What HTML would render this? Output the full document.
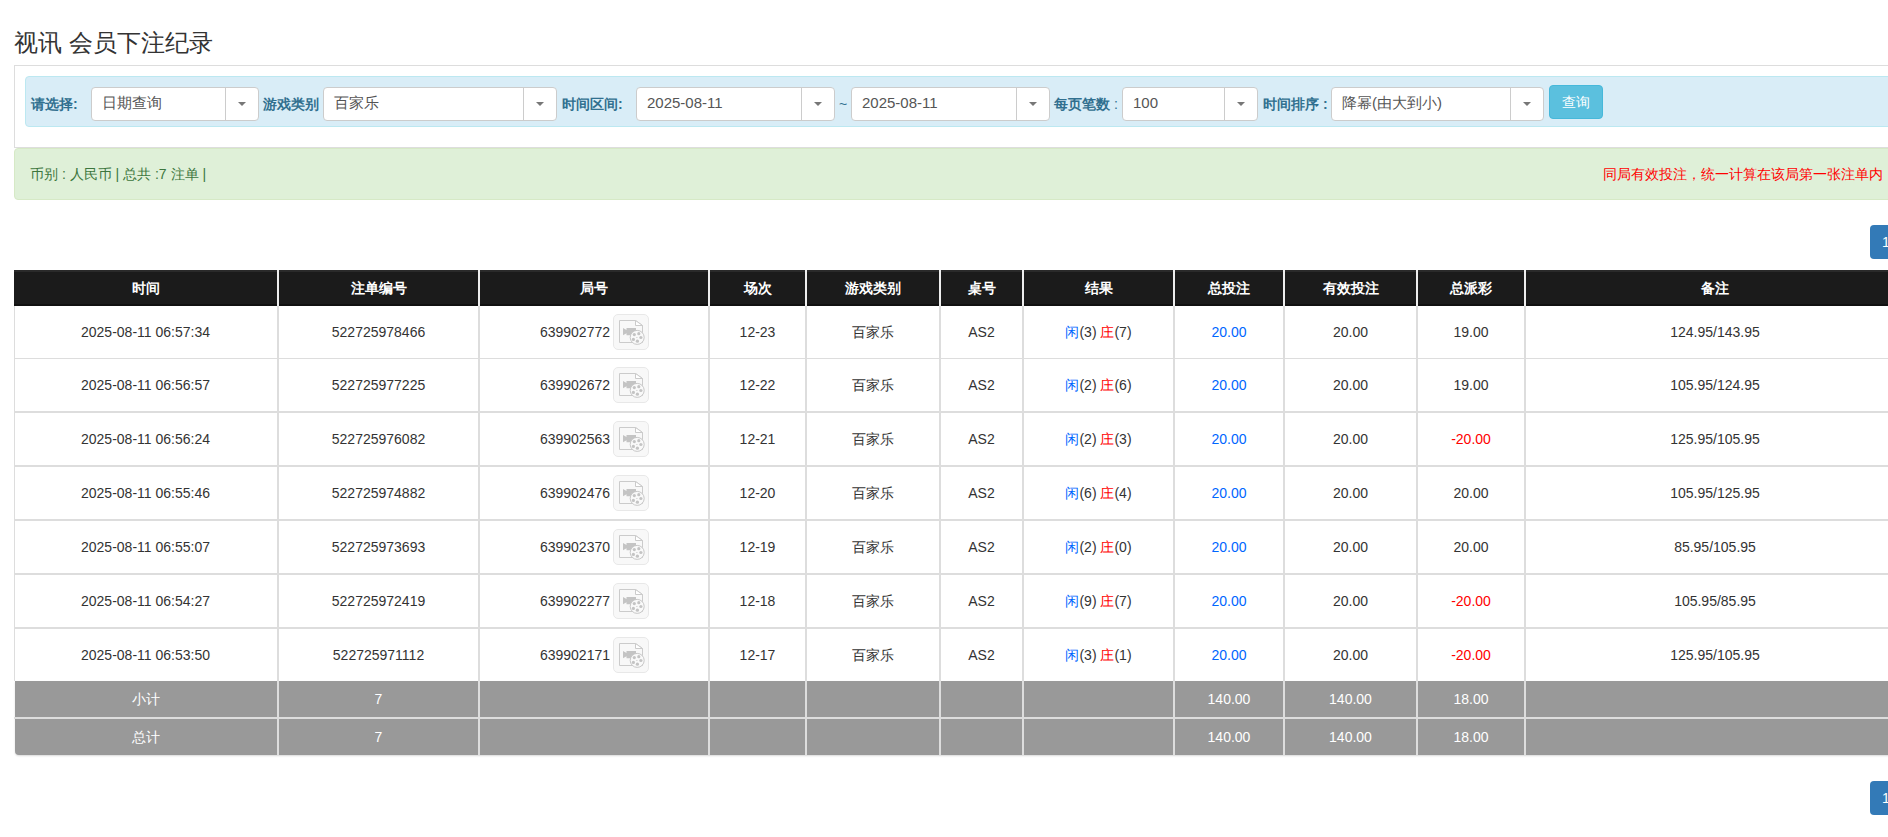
<!DOCTYPE html>
<html><head><meta charset="utf-8">
<style>
html,body{margin:0;padding:0;background:#fff;width:1888px;height:837px;overflow:hidden;position:relative;}
body{font-family:"Liberation Sans",sans-serif;color:#333;font-size:14px;}
.abs{position:absolute;}
.title{left:14px;top:26px;font-size:24px;line-height:34px;color:#333;white-space:nowrap;}
.panel{left:14px;top:65px;width:1900px;height:81px;border:1px solid #ddd;border-right:none;background:#fff;}
.bar{left:25px;top:76px;width:1880px;height:49px;border:1px solid #bce8f1;background:#d9edf7;border-radius:4px;}
.lbl{position:absolute;top:94px;line-height:20px;font-size:14px;font-weight:bold;color:#31708f;white-space:nowrap;}
.sel{position:absolute;top:87px;height:32px;border:1px solid #ccc;border-radius:4px;background:#fff;}
.sel .t{position:absolute;left:10px;top:5px;line-height:20px;font-size:15px;color:#555;white-space:nowrap;}
.sel .d{position:absolute;top:0;bottom:0;width:0;border-left:1px solid #ccc;}
.sel .c{position:absolute;top:14px;width:0;height:0;border-left:4px solid transparent;border-right:4px solid transparent;border-top:4px solid #777;}
.btn{left:1549px;top:85px;width:52px;height:32px;background:#5bc0de;border:1px solid #46b8da;border-radius:4px;color:#fff;font-size:14px;line-height:32px;text-align:center;}
.alert{left:14px;top:148px;width:1900px;height:50px;background:#dff0d8;border:1px solid #d6e9c6;border-radius:4px;}
.atext{left:30px;top:164px;line-height:20px;font-size:14px;color:#3c763d;white-space:nowrap;}
.rtext{left:1603px;top:164px;line-height:20px;font-size:14px;color:#f00;white-space:nowrap;}
.pg{left:1870px;top:225px;width:40px;height:34px;background:#337ab7;border-radius:4px;}
.blue{color:#0066ff}.red{color:#f00}
.cell{position:absolute;text-align:center;white-space:nowrap;font-size:14px;color:#333;}
</style></head><body>
<div class="abs title">视讯 会员下注纪录</div>
<div class="abs panel"></div>
<div class="abs bar"></div>
<div class="lbl" style="left:31px">请选择:</div>
<div class="sel" style="left:91px;width:166px"><span class="t">日期查询</span><span class="d" style="left:133px"></span><span class="c" style="left:146px"></span></div>
<div class="lbl" style="left:263px">游戏类别</div>
<div class="sel" style="left:323px;width:232px"><span class="t">百家乐</span><span class="d" style="left:199px"></span><span class="c" style="left:212px"></span></div>
<div class="lbl" style="left:562px">时间区间:</div>
<div class="sel" style="left:636px;width:197px"><span class="t">2025-08-11</span><span class="d" style="left:164px"></span><span class="c" style="left:177px"></span></div>
<div class="abs" style="left:839px;top:94px;line-height:20px;color:#31708f">~</div>
<div class="sel" style="left:851px;width:197px"><span class="t">2025-08-11</span><span class="d" style="left:164px"></span><span class="c" style="left:177px"></span></div>
<div class="lbl" style="left:1054px">每页笔数 <span style="font-weight:normal">:</span></div>
<div class="sel" style="left:1122px;width:134px"><span class="t">100</span><span class="d" style="left:101px"></span><span class="c" style="left:114px"></span></div>
<div class="lbl" style="left:1263px">时间排序 :</div>
<div class="sel" style="left:1331px;width:211px"><span class="t">降幂(由大到小)</span><span class="d" style="left:178px"></span><span class="c" style="left:191px"></span></div>
<div class="abs btn">查询</div>
<div class="abs alert"></div>
<div class="abs atext">币别 : 人民币 | 总共 :7 注单 |</div>
<div class="abs rtext">同局有效投注，统一计算在该局第一张注单内</div>
<div class="abs pg"></div>
<div class="abs" style="left:14px;top:270px;width:1890px;height:36px;background:#1b1b1b;"></div>
<div class="abs" style="left:14px;top:270px;width:1890px;height:2px;background:#2a2a2a;"></div>
<div class="abs" style="left:14px;top:304px;width:1890px;height:2px;background:#111;"></div>
<div class="abs" style="left:14px;top:358px;width:1890px;height:1px;background:#ddd;"></div>
<div class="abs" style="left:14px;top:411px;width:1890px;height:2px;background:#ddd;"></div>
<div class="abs" style="left:14px;top:465px;width:1890px;height:2px;background:#ddd;"></div>
<div class="abs" style="left:14px;top:519px;width:1890px;height:2px;background:#ddd;"></div>
<div class="abs" style="left:14px;top:573px;width:1890px;height:2px;background:#ddd;"></div>
<div class="abs" style="left:14px;top:627px;width:1890px;height:2px;background:#ddd;"></div>
<div class="abs" style="left:14px;top:306px;width:1px;height:375px;background:#ddd;"></div>
<div class="abs" style="left:15px;top:681px;width:1889px;height:74px;background:#999;border-radius:0 0 4px 4px;box-shadow:0 1px 2px rgba(0,0,0,.15);"></div>
<div class="abs" style="left:14px;top:717px;width:1890px;height:2px;background:#ddd;"></div>
<div class="abs" style="left:277px;top:270px;width:2px;height:36px;background:#eee;"></div>
<div class="abs" style="left:277px;top:306px;width:2px;height:449px;background:#ddd;"></div>
<div class="abs" style="left:478px;top:270px;width:2px;height:36px;background:#eee;"></div>
<div class="abs" style="left:478px;top:306px;width:2px;height:449px;background:#ddd;"></div>
<div class="abs" style="left:708px;top:270px;width:2px;height:36px;background:#eee;"></div>
<div class="abs" style="left:708px;top:306px;width:2px;height:449px;background:#ddd;"></div>
<div class="abs" style="left:805px;top:270px;width:2px;height:36px;background:#eee;"></div>
<div class="abs" style="left:805px;top:306px;width:2px;height:449px;background:#ddd;"></div>
<div class="abs" style="left:939px;top:270px;width:2px;height:36px;background:#eee;"></div>
<div class="abs" style="left:939px;top:306px;width:2px;height:449px;background:#ddd;"></div>
<div class="abs" style="left:1022px;top:270px;width:2px;height:36px;background:#eee;"></div>
<div class="abs" style="left:1022px;top:306px;width:2px;height:449px;background:#ddd;"></div>
<div class="abs" style="left:1173px;top:270px;width:2px;height:36px;background:#eee;"></div>
<div class="abs" style="left:1173px;top:306px;width:2px;height:449px;background:#ddd;"></div>
<div class="abs" style="left:1283px;top:270px;width:2px;height:36px;background:#eee;"></div>
<div class="abs" style="left:1283px;top:306px;width:2px;height:449px;background:#ddd;"></div>
<div class="abs" style="left:1416px;top:270px;width:2px;height:36px;background:#eee;"></div>
<div class="abs" style="left:1416px;top:306px;width:2px;height:449px;background:#ddd;"></div>
<div class="abs" style="left:1524px;top:270px;width:2px;height:36px;background:#eee;"></div>
<div class="abs" style="left:1524px;top:306px;width:2px;height:449px;background:#ddd;"></div>
<div class="cell" style="left:14px;top:270px;width:263px;height:36px;line-height:36px;color:#fff;font-weight:bold;">时间</div>
<div class="cell" style="left:279px;top:270px;width:199px;height:36px;line-height:36px;color:#fff;font-weight:bold;">注单编号</div>
<div class="cell" style="left:480px;top:270px;width:228px;height:36px;line-height:36px;color:#fff;font-weight:bold;">局号</div>
<div class="cell" style="left:710px;top:270px;width:95px;height:36px;line-height:36px;color:#fff;font-weight:bold;">场次</div>
<div class="cell" style="left:807px;top:270px;width:132px;height:36px;line-height:36px;color:#fff;font-weight:bold;">游戏类别</div>
<div class="cell" style="left:941px;top:270px;width:81px;height:36px;line-height:36px;color:#fff;font-weight:bold;">桌号</div>
<div class="cell" style="left:1024px;top:270px;width:149px;height:36px;line-height:36px;color:#fff;font-weight:bold;">结果</div>
<div class="cell" style="left:1175px;top:270px;width:108px;height:36px;line-height:36px;color:#fff;font-weight:bold;">总投注</div>
<div class="cell" style="left:1285px;top:270px;width:131px;height:36px;line-height:36px;color:#fff;font-weight:bold;">有效投注</div>
<div class="cell" style="left:1418px;top:270px;width:106px;height:36px;line-height:36px;color:#fff;font-weight:bold;">总派彩</div>
<div class="cell" style="left:1526px;top:270px;width:378px;height:36px;line-height:36px;color:#fff;font-weight:bold;">备注</div>
<div class="cell" style="left:480px;top:306px;width:130px;height:52px;line-height:52px;text-align:right">639902772</div>
<div class="abs" style="left:613px;top:314px;width:36px;height:36px"><svg width="36" height="36" viewBox="0 0 36 36"><rect x="0.5" y="0.5" width="35" height="35" rx="4.5" fill="#f8f8f8" stroke="#e8e8e8"/><path d="M6.5 6.5H22.5L29.5 11.5V28.5H6.5Z" fill="#f8f8f8" stroke="#cbcbcb"/><path d="M22.5 6.5V11.5H29.5Z" fill="#fff" stroke="#cbcbcb" stroke-linejoin="round"/><path d="M10 14L13.5 16V14H23V21.3H13.5V19.3L10 21.3Z" fill="#c4c4c4"/><circle cx="24.2" cy="23.4" r="7" fill="#f9f9f9" stroke="#c8c8c8"/><g fill="#c4c4c4"><circle cx="21.3" cy="20.6" r="1.6"/><circle cx="25.8" cy="19.7" r="1.6"/><circle cx="27.9" cy="23.5" r="1.6"/><circle cx="24.4" cy="27.2" r="1.6"/><circle cx="20.4" cy="25.4" r="1.6"/><circle cx="23.9" cy="23.5" r="0.6"/></g></svg></div>
<div class="cell" style="left:14px;top:306px;width:263px;height:52px;line-height:52px;">2025-08-11 06:57:34</div>
<div class="cell" style="left:279px;top:306px;width:199px;height:52px;line-height:52px;">522725978466</div>
<div class="cell" style="left:710px;top:306px;width:95px;height:52px;line-height:52px;">12-23</div>
<div class="cell" style="left:807px;top:306px;width:132px;height:52px;line-height:52px;">百家乐</div>
<div class="cell" style="left:941px;top:306px;width:81px;height:52px;line-height:52px;">AS2</div>
<div class="cell" style="left:1024px;top:306px;width:149px;height:52px;line-height:52px;"><span class="blue">闲</span>(3) <span class="red">庄</span>(7)</div>
<div class="cell" style="left:1175px;top:306px;width:108px;height:52px;line-height:52px;"><span class="blue">20.00</span></div>
<div class="cell" style="left:1285px;top:306px;width:131px;height:52px;line-height:52px;">20.00</div>
<div class="cell" style="left:1418px;top:306px;width:106px;height:52px;line-height:52px;">19.00</div>
<div class="cell" style="left:1526px;top:306px;width:378px;height:52px;line-height:52px;">124.95/143.95</div>
<div class="cell" style="left:480px;top:359px;width:130px;height:52px;line-height:52px;text-align:right">639902672</div>
<div class="abs" style="left:613px;top:367px;width:36px;height:36px"><svg width="36" height="36" viewBox="0 0 36 36"><rect x="0.5" y="0.5" width="35" height="35" rx="4.5" fill="#f8f8f8" stroke="#e8e8e8"/><path d="M6.5 6.5H22.5L29.5 11.5V28.5H6.5Z" fill="#f8f8f8" stroke="#cbcbcb"/><path d="M22.5 6.5V11.5H29.5Z" fill="#fff" stroke="#cbcbcb" stroke-linejoin="round"/><path d="M10 14L13.5 16V14H23V21.3H13.5V19.3L10 21.3Z" fill="#c4c4c4"/><circle cx="24.2" cy="23.4" r="7" fill="#f9f9f9" stroke="#c8c8c8"/><g fill="#c4c4c4"><circle cx="21.3" cy="20.6" r="1.6"/><circle cx="25.8" cy="19.7" r="1.6"/><circle cx="27.9" cy="23.5" r="1.6"/><circle cx="24.4" cy="27.2" r="1.6"/><circle cx="20.4" cy="25.4" r="1.6"/><circle cx="23.9" cy="23.5" r="0.6"/></g></svg></div>
<div class="cell" style="left:14px;top:359px;width:263px;height:52px;line-height:52px;">2025-08-11 06:56:57</div>
<div class="cell" style="left:279px;top:359px;width:199px;height:52px;line-height:52px;">522725977225</div>
<div class="cell" style="left:710px;top:359px;width:95px;height:52px;line-height:52px;">12-22</div>
<div class="cell" style="left:807px;top:359px;width:132px;height:52px;line-height:52px;">百家乐</div>
<div class="cell" style="left:941px;top:359px;width:81px;height:52px;line-height:52px;">AS2</div>
<div class="cell" style="left:1024px;top:359px;width:149px;height:52px;line-height:52px;"><span class="blue">闲</span>(2) <span class="red">庄</span>(6)</div>
<div class="cell" style="left:1175px;top:359px;width:108px;height:52px;line-height:52px;"><span class="blue">20.00</span></div>
<div class="cell" style="left:1285px;top:359px;width:131px;height:52px;line-height:52px;">20.00</div>
<div class="cell" style="left:1418px;top:359px;width:106px;height:52px;line-height:52px;">19.00</div>
<div class="cell" style="left:1526px;top:359px;width:378px;height:52px;line-height:52px;">105.95/124.95</div>
<div class="cell" style="left:480px;top:413px;width:130px;height:52px;line-height:52px;text-align:right">639902563</div>
<div class="abs" style="left:613px;top:421px;width:36px;height:36px"><svg width="36" height="36" viewBox="0 0 36 36"><rect x="0.5" y="0.5" width="35" height="35" rx="4.5" fill="#f8f8f8" stroke="#e8e8e8"/><path d="M6.5 6.5H22.5L29.5 11.5V28.5H6.5Z" fill="#f8f8f8" stroke="#cbcbcb"/><path d="M22.5 6.5V11.5H29.5Z" fill="#fff" stroke="#cbcbcb" stroke-linejoin="round"/><path d="M10 14L13.5 16V14H23V21.3H13.5V19.3L10 21.3Z" fill="#c4c4c4"/><circle cx="24.2" cy="23.4" r="7" fill="#f9f9f9" stroke="#c8c8c8"/><g fill="#c4c4c4"><circle cx="21.3" cy="20.6" r="1.6"/><circle cx="25.8" cy="19.7" r="1.6"/><circle cx="27.9" cy="23.5" r="1.6"/><circle cx="24.4" cy="27.2" r="1.6"/><circle cx="20.4" cy="25.4" r="1.6"/><circle cx="23.9" cy="23.5" r="0.6"/></g></svg></div>
<div class="cell" style="left:14px;top:413px;width:263px;height:52px;line-height:52px;">2025-08-11 06:56:24</div>
<div class="cell" style="left:279px;top:413px;width:199px;height:52px;line-height:52px;">522725976082</div>
<div class="cell" style="left:710px;top:413px;width:95px;height:52px;line-height:52px;">12-21</div>
<div class="cell" style="left:807px;top:413px;width:132px;height:52px;line-height:52px;">百家乐</div>
<div class="cell" style="left:941px;top:413px;width:81px;height:52px;line-height:52px;">AS2</div>
<div class="cell" style="left:1024px;top:413px;width:149px;height:52px;line-height:52px;"><span class="blue">闲</span>(2) <span class="red">庄</span>(3)</div>
<div class="cell" style="left:1175px;top:413px;width:108px;height:52px;line-height:52px;"><span class="blue">20.00</span></div>
<div class="cell" style="left:1285px;top:413px;width:131px;height:52px;line-height:52px;">20.00</div>
<div class="cell" style="left:1418px;top:413px;width:106px;height:52px;line-height:52px;"><span class="red">-20.00</span></div>
<div class="cell" style="left:1526px;top:413px;width:378px;height:52px;line-height:52px;">125.95/105.95</div>
<div class="cell" style="left:480px;top:467px;width:130px;height:52px;line-height:52px;text-align:right">639902476</div>
<div class="abs" style="left:613px;top:475px;width:36px;height:36px"><svg width="36" height="36" viewBox="0 0 36 36"><rect x="0.5" y="0.5" width="35" height="35" rx="4.5" fill="#f8f8f8" stroke="#e8e8e8"/><path d="M6.5 6.5H22.5L29.5 11.5V28.5H6.5Z" fill="#f8f8f8" stroke="#cbcbcb"/><path d="M22.5 6.5V11.5H29.5Z" fill="#fff" stroke="#cbcbcb" stroke-linejoin="round"/><path d="M10 14L13.5 16V14H23V21.3H13.5V19.3L10 21.3Z" fill="#c4c4c4"/><circle cx="24.2" cy="23.4" r="7" fill="#f9f9f9" stroke="#c8c8c8"/><g fill="#c4c4c4"><circle cx="21.3" cy="20.6" r="1.6"/><circle cx="25.8" cy="19.7" r="1.6"/><circle cx="27.9" cy="23.5" r="1.6"/><circle cx="24.4" cy="27.2" r="1.6"/><circle cx="20.4" cy="25.4" r="1.6"/><circle cx="23.9" cy="23.5" r="0.6"/></g></svg></div>
<div class="cell" style="left:14px;top:467px;width:263px;height:52px;line-height:52px;">2025-08-11 06:55:46</div>
<div class="cell" style="left:279px;top:467px;width:199px;height:52px;line-height:52px;">522725974882</div>
<div class="cell" style="left:710px;top:467px;width:95px;height:52px;line-height:52px;">12-20</div>
<div class="cell" style="left:807px;top:467px;width:132px;height:52px;line-height:52px;">百家乐</div>
<div class="cell" style="left:941px;top:467px;width:81px;height:52px;line-height:52px;">AS2</div>
<div class="cell" style="left:1024px;top:467px;width:149px;height:52px;line-height:52px;"><span class="blue">闲</span>(6) <span class="red">庄</span>(4)</div>
<div class="cell" style="left:1175px;top:467px;width:108px;height:52px;line-height:52px;"><span class="blue">20.00</span></div>
<div class="cell" style="left:1285px;top:467px;width:131px;height:52px;line-height:52px;">20.00</div>
<div class="cell" style="left:1418px;top:467px;width:106px;height:52px;line-height:52px;">20.00</div>
<div class="cell" style="left:1526px;top:467px;width:378px;height:52px;line-height:52px;">105.95/125.95</div>
<div class="cell" style="left:480px;top:521px;width:130px;height:52px;line-height:52px;text-align:right">639902370</div>
<div class="abs" style="left:613px;top:529px;width:36px;height:36px"><svg width="36" height="36" viewBox="0 0 36 36"><rect x="0.5" y="0.5" width="35" height="35" rx="4.5" fill="#f8f8f8" stroke="#e8e8e8"/><path d="M6.5 6.5H22.5L29.5 11.5V28.5H6.5Z" fill="#f8f8f8" stroke="#cbcbcb"/><path d="M22.5 6.5V11.5H29.5Z" fill="#fff" stroke="#cbcbcb" stroke-linejoin="round"/><path d="M10 14L13.5 16V14H23V21.3H13.5V19.3L10 21.3Z" fill="#c4c4c4"/><circle cx="24.2" cy="23.4" r="7" fill="#f9f9f9" stroke="#c8c8c8"/><g fill="#c4c4c4"><circle cx="21.3" cy="20.6" r="1.6"/><circle cx="25.8" cy="19.7" r="1.6"/><circle cx="27.9" cy="23.5" r="1.6"/><circle cx="24.4" cy="27.2" r="1.6"/><circle cx="20.4" cy="25.4" r="1.6"/><circle cx="23.9" cy="23.5" r="0.6"/></g></svg></div>
<div class="cell" style="left:14px;top:521px;width:263px;height:52px;line-height:52px;">2025-08-11 06:55:07</div>
<div class="cell" style="left:279px;top:521px;width:199px;height:52px;line-height:52px;">522725973693</div>
<div class="cell" style="left:710px;top:521px;width:95px;height:52px;line-height:52px;">12-19</div>
<div class="cell" style="left:807px;top:521px;width:132px;height:52px;line-height:52px;">百家乐</div>
<div class="cell" style="left:941px;top:521px;width:81px;height:52px;line-height:52px;">AS2</div>
<div class="cell" style="left:1024px;top:521px;width:149px;height:52px;line-height:52px;"><span class="blue">闲</span>(2) <span class="red">庄</span>(0)</div>
<div class="cell" style="left:1175px;top:521px;width:108px;height:52px;line-height:52px;"><span class="blue">20.00</span></div>
<div class="cell" style="left:1285px;top:521px;width:131px;height:52px;line-height:52px;">20.00</div>
<div class="cell" style="left:1418px;top:521px;width:106px;height:52px;line-height:52px;">20.00</div>
<div class="cell" style="left:1526px;top:521px;width:378px;height:52px;line-height:52px;">85.95/105.95</div>
<div class="cell" style="left:480px;top:575px;width:130px;height:52px;line-height:52px;text-align:right">639902277</div>
<div class="abs" style="left:613px;top:583px;width:36px;height:36px"><svg width="36" height="36" viewBox="0 0 36 36"><rect x="0.5" y="0.5" width="35" height="35" rx="4.5" fill="#f8f8f8" stroke="#e8e8e8"/><path d="M6.5 6.5H22.5L29.5 11.5V28.5H6.5Z" fill="#f8f8f8" stroke="#cbcbcb"/><path d="M22.5 6.5V11.5H29.5Z" fill="#fff" stroke="#cbcbcb" stroke-linejoin="round"/><path d="M10 14L13.5 16V14H23V21.3H13.5V19.3L10 21.3Z" fill="#c4c4c4"/><circle cx="24.2" cy="23.4" r="7" fill="#f9f9f9" stroke="#c8c8c8"/><g fill="#c4c4c4"><circle cx="21.3" cy="20.6" r="1.6"/><circle cx="25.8" cy="19.7" r="1.6"/><circle cx="27.9" cy="23.5" r="1.6"/><circle cx="24.4" cy="27.2" r="1.6"/><circle cx="20.4" cy="25.4" r="1.6"/><circle cx="23.9" cy="23.5" r="0.6"/></g></svg></div>
<div class="cell" style="left:14px;top:575px;width:263px;height:52px;line-height:52px;">2025-08-11 06:54:27</div>
<div class="cell" style="left:279px;top:575px;width:199px;height:52px;line-height:52px;">522725972419</div>
<div class="cell" style="left:710px;top:575px;width:95px;height:52px;line-height:52px;">12-18</div>
<div class="cell" style="left:807px;top:575px;width:132px;height:52px;line-height:52px;">百家乐</div>
<div class="cell" style="left:941px;top:575px;width:81px;height:52px;line-height:52px;">AS2</div>
<div class="cell" style="left:1024px;top:575px;width:149px;height:52px;line-height:52px;"><span class="blue">闲</span>(9) <span class="red">庄</span>(7)</div>
<div class="cell" style="left:1175px;top:575px;width:108px;height:52px;line-height:52px;"><span class="blue">20.00</span></div>
<div class="cell" style="left:1285px;top:575px;width:131px;height:52px;line-height:52px;">20.00</div>
<div class="cell" style="left:1418px;top:575px;width:106px;height:52px;line-height:52px;"><span class="red">-20.00</span></div>
<div class="cell" style="left:1526px;top:575px;width:378px;height:52px;line-height:52px;">105.95/85.95</div>
<div class="cell" style="left:480px;top:629px;width:130px;height:52px;line-height:52px;text-align:right">639902171</div>
<div class="abs" style="left:613px;top:637px;width:36px;height:36px"><svg width="36" height="36" viewBox="0 0 36 36"><rect x="0.5" y="0.5" width="35" height="35" rx="4.5" fill="#f8f8f8" stroke="#e8e8e8"/><path d="M6.5 6.5H22.5L29.5 11.5V28.5H6.5Z" fill="#f8f8f8" stroke="#cbcbcb"/><path d="M22.5 6.5V11.5H29.5Z" fill="#fff" stroke="#cbcbcb" stroke-linejoin="round"/><path d="M10 14L13.5 16V14H23V21.3H13.5V19.3L10 21.3Z" fill="#c4c4c4"/><circle cx="24.2" cy="23.4" r="7" fill="#f9f9f9" stroke="#c8c8c8"/><g fill="#c4c4c4"><circle cx="21.3" cy="20.6" r="1.6"/><circle cx="25.8" cy="19.7" r="1.6"/><circle cx="27.9" cy="23.5" r="1.6"/><circle cx="24.4" cy="27.2" r="1.6"/><circle cx="20.4" cy="25.4" r="1.6"/><circle cx="23.9" cy="23.5" r="0.6"/></g></svg></div>
<div class="cell" style="left:14px;top:629px;width:263px;height:52px;line-height:52px;">2025-08-11 06:53:50</div>
<div class="cell" style="left:279px;top:629px;width:199px;height:52px;line-height:52px;">522725971112</div>
<div class="cell" style="left:710px;top:629px;width:95px;height:52px;line-height:52px;">12-17</div>
<div class="cell" style="left:807px;top:629px;width:132px;height:52px;line-height:52px;">百家乐</div>
<div class="cell" style="left:941px;top:629px;width:81px;height:52px;line-height:52px;">AS2</div>
<div class="cell" style="left:1024px;top:629px;width:149px;height:52px;line-height:52px;"><span class="blue">闲</span>(3) <span class="red">庄</span>(1)</div>
<div class="cell" style="left:1175px;top:629px;width:108px;height:52px;line-height:52px;"><span class="blue">20.00</span></div>
<div class="cell" style="left:1285px;top:629px;width:131px;height:52px;line-height:52px;">20.00</div>
<div class="cell" style="left:1418px;top:629px;width:106px;height:52px;line-height:52px;"><span class="red">-20.00</span></div>
<div class="cell" style="left:1526px;top:629px;width:378px;height:52px;line-height:52px;">125.95/105.95</div>
<div class="cell" style="left:14px;top:681px;width:263px;height:36px;line-height:36px;color:#fff;">小计</div>
<div class="cell" style="left:279px;top:681px;width:199px;height:36px;line-height:36px;color:#fff;">7</div>
<div class="cell" style="left:1175px;top:681px;width:108px;height:36px;line-height:36px;color:#fff;">140.00</div>
<div class="cell" style="left:1285px;top:681px;width:131px;height:36px;line-height:36px;color:#fff;">140.00</div>
<div class="cell" style="left:1418px;top:681px;width:106px;height:36px;line-height:36px;color:#fff;">18.00</div>
<div class="cell" style="left:14px;top:719px;width:263px;height:36px;line-height:36px;color:#fff;">总计</div>
<div class="cell" style="left:279px;top:719px;width:199px;height:36px;line-height:36px;color:#fff;">7</div>
<div class="cell" style="left:1175px;top:719px;width:108px;height:36px;line-height:36px;color:#fff;">140.00</div>
<div class="cell" style="left:1285px;top:719px;width:131px;height:36px;line-height:36px;color:#fff;">140.00</div>
<div class="cell" style="left:1418px;top:719px;width:106px;height:36px;line-height:36px;color:#fff;">18.00</div>
<div class="abs pg" style="top:781px;height:34px;"></div>
<div class="abs" style="left:1882px;top:788px;line-height:20px;color:#fff;font-size:14px">1</div>
<div class="abs" style="left:1882px;top:232px;line-height:20px;color:#fff;font-size:14px">1</div>
</body></html>
